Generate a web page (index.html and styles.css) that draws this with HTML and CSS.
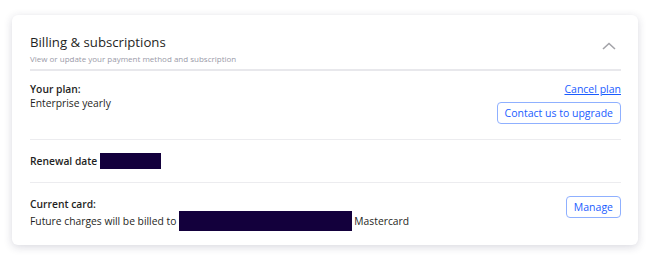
FILE: index.html
```html
<!DOCTYPE html>
<html lang="en">
<head>
  <meta charset="UTF-8" />
  <title>Billing &amp; subscriptions</title>
  <link rel="stylesheet" href="styles.css">
</head>
<body>

  <div class="card">
    <div class="card-header">
      <div>
        <h2>Billing &amp; subscriptions</h2>
        <p class="subtitle">View or update your payment method and subscription</p>
      </div>
      <svg class="chevron" width="14" height="8" viewBox="0 0 14 8">
        <path d="M1 7 L7 1.5 L13 7" fill="none" stroke="#a3a3a8" stroke-width="1.6"/>
      </svg>
    </div>

    <div class="row">
      <div>
        <div class="label">Your plan:</div>
        <div class="value">Enterprise yearly</div>
      </div>
      <div class="actions">
        <a href="#" class="link">Cancel plan</a>
        <button class="btn">Contact us to upgrade</button>
      </div>
    </div>

    <div class="row row-renewal">
      <div class="label">Renewal date <span class="redact redact-date"></span></div>
    </div>

    <div class="row row-card">
      <div>
        <div class="label">Current card:</div>
        <div class="value">Future charges will be billed to <span class="redact redact-card"></span> Mastercard</div>
      </div>
      <button class="btn btn-manage">Manage</button>
    </div>
  </div>

</body>
</html>
```

FILE: styles.css
```css
body {
  margin: 0;
  padding: 15px 12px;
  background: #ffffff;
  font-family: "Open Sans", Arial, sans-serif;
  color: #1f1f24;
}
.card {
  background: #fff;
  border-radius: 6px;
  box-shadow: 0 2px 8px rgba(40, 40, 80, 0.18);
  padding: 18px 17px 18px 18px;
  height: 230px;
  box-sizing: border-box;
}
.card-header {
  display: flex;
  justify-content: space-between;
  align-items: flex-start;
  border-bottom: 2px solid #e8e8ec;
  padding-bottom: 4px;
}
h2 {
  margin: 0;
  font-size: 13.2px;
  font-weight: 500;
  line-height: 18px;
  color: #1f1f24;
}
.subtitle {
  margin: 2px 0 0;
  font-size: 8px;
  color: #9a9aa8;
  line-height: 12px;
}
.chevron {
  margin: 9px 5px 0 0;
}
.row {
  display: flex;
  justify-content: space-between;
  align-items: flex-start;
  border-bottom: 1px solid #ececef;
  padding: 11px 0 15px;
}
.row-renewal {
  padding: 13px 0 13px;
}
.row-card {
  border-bottom: none;
  padding: 14px 0 0;
}
.label {
  font-size: 10.3px;
  font-weight: 600;
  line-height: 14px;
  display: flex;
  align-items: center;
}
.value {
  font-size: 10.3px;
  line-height: 14px;
  display: flex;
  align-items: center;
}
.actions {
  display: flex;
  flex-direction: column;
  align-items: flex-end;
  gap: 6px;
}
.link {
  color: #1a5cff;
  font-size: 10.5px;
  line-height: 14px;
}
.btn {
  font-family: inherit;
  font-size: 10.5px;
  font-weight: 500;
  color: #1a5cff;
  background: #fff;
  border: 1px solid #8fb0ff;
  border-radius: 4px;
  padding: 0 7px;
  height: 22px;
}
.btn-manage {
  margin-top: -1px;
}
.redact {
  display: inline-block;
  background: #13003c;
  margin-left: 3px;
  height: 16px;
}
.redact-date {
  width: 61px;
}
.redact-card {
  width: 173px;
  height: 20px;
  margin-right: 2px;
}
```
